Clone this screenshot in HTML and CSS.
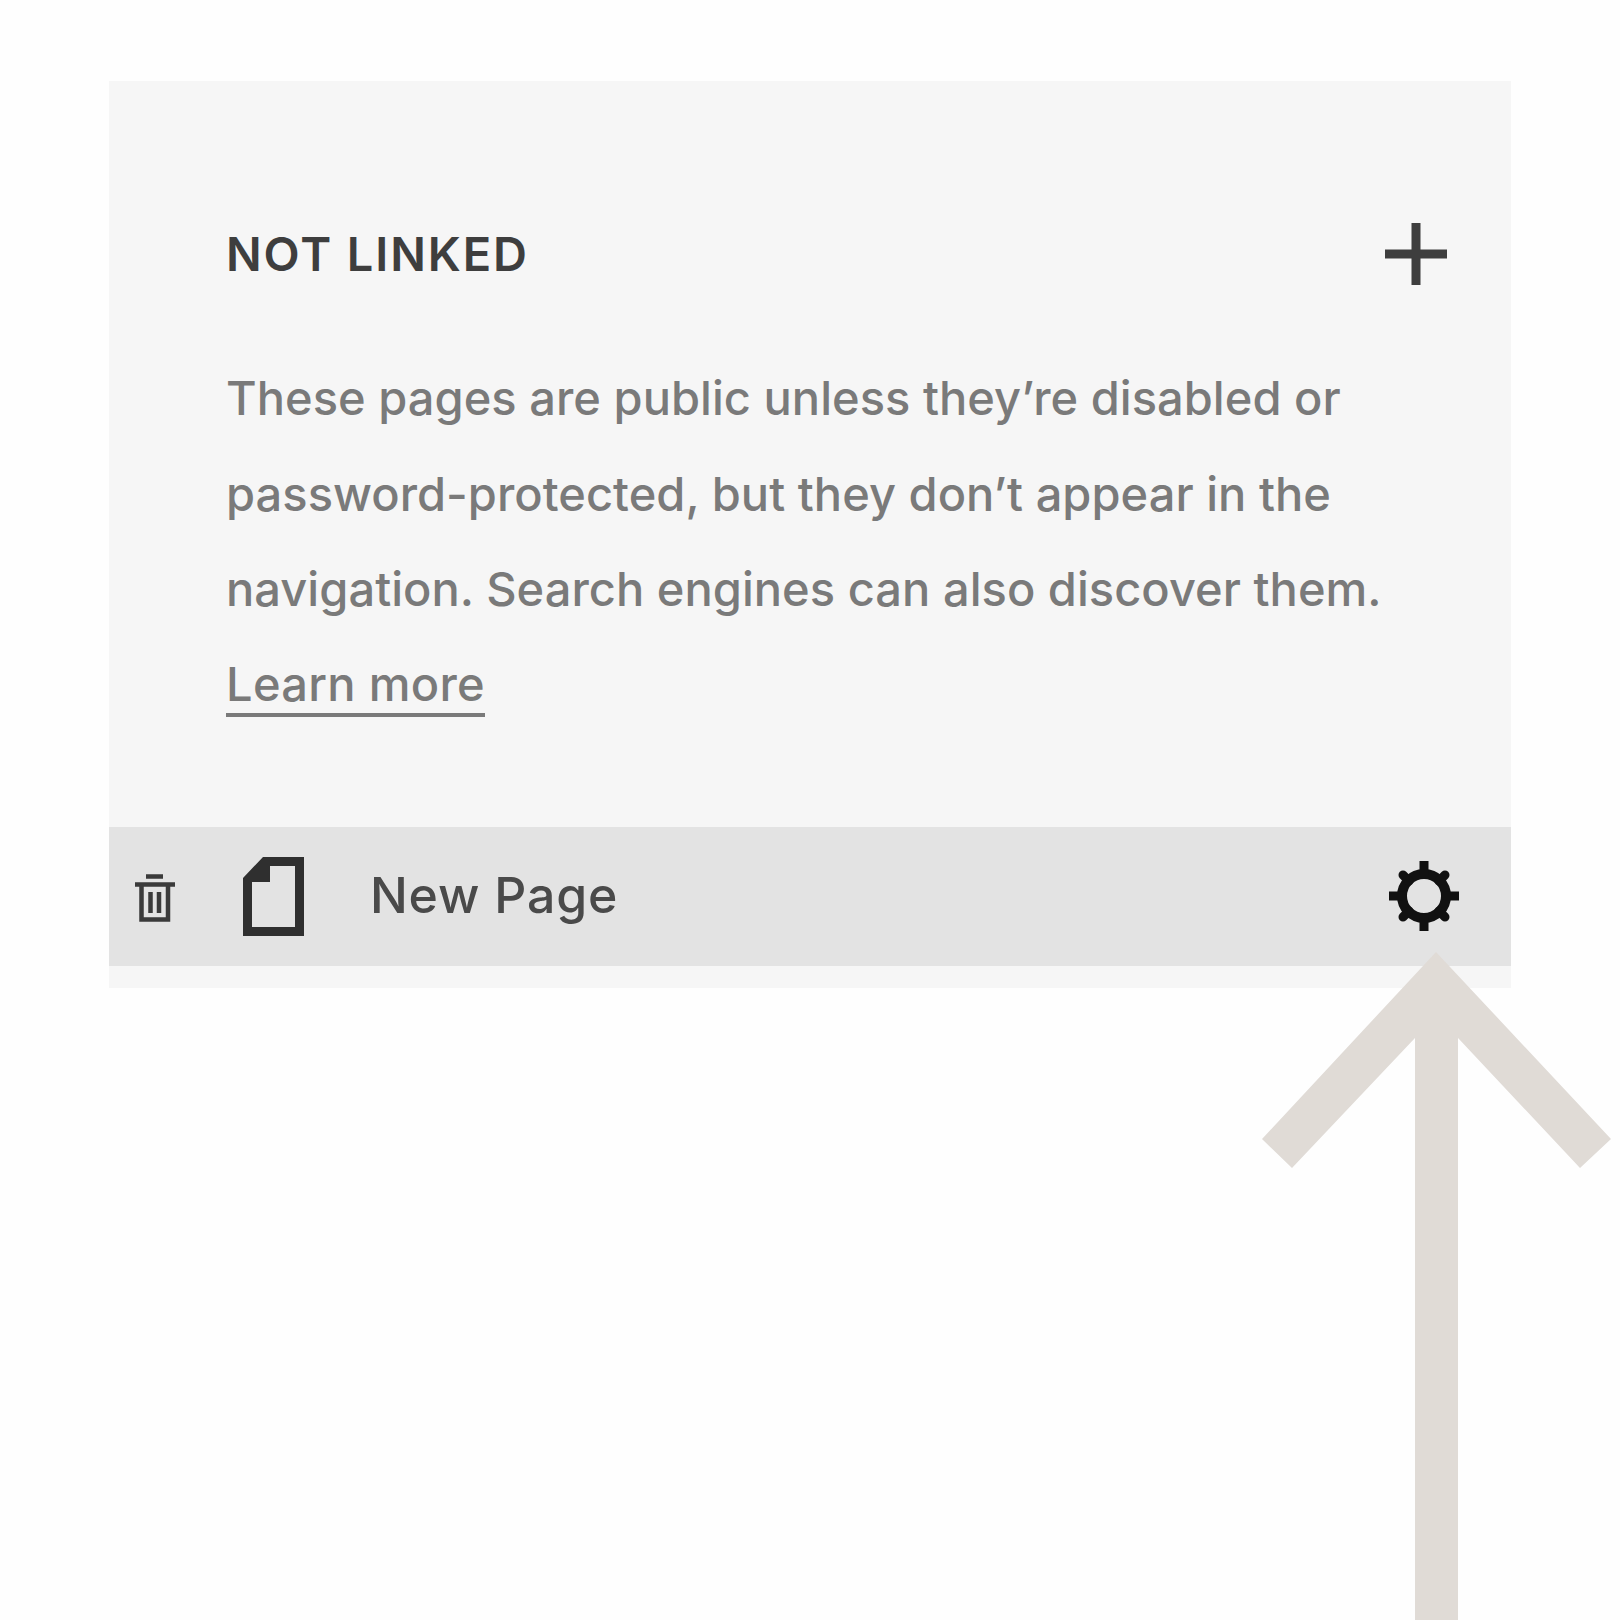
FILE: index.html
```html
<!DOCTYPE html>
<html lang="en">
<head>
    <meta charset="UTF-8">
    <title>Not Linked</title>
    <link rel="stylesheet" href="styles.css">
</head>
<body>
    <div class="panel">
        <div class="panel-head">
            <h2>NOT LINKED</h2>
            <svg class="plus-icon" viewBox="0 0 62 62"><path d="M31 0v62M0 31h62" fill="none" stroke="#3e3e3e" stroke-width="9"/></svg>
        </div>
        <p class="panel-text">These pages are public unless they’re disabled or password-protected, but they don’t appear in the navigation. Search engines can also discover them. <a href="#">Learn more</a></p>

        <div class="page-row">
            <svg class="trash-icon" viewBox="0 0 40 48">
                <path d="M11 2.500h17M0 10.500h40M6.500 10v35.500h26.500V10M15.500 18v21M24 18v21" fill="none" stroke="#3a3a3a" stroke-width="4.500"/>
            </svg>
            <svg class="page-icon" viewBox="0 0 61 79">
                <path d="M20 0H61V79H0V21ZM27 9V25H9V70H52V9Z" fill="#2f2f2f" fill-rule="evenodd"/>
            </svg>
            <span class="page-name">New Page</span>
            <svg class="gear-icon" viewBox="0 0 70 70">
                <circle cx="35" cy="35" r="22" fill="none" stroke="#111" stroke-width="10"/>
                <path d="M35 0v14M35 56v14M0 35h14M56 35h14" fill="none" stroke="#111" stroke-width="9"/>
                <path d="M14 14l6 6M56 14l-6 6M14 56l6-6M56 56l-6-6" fill="none" stroke="#111" stroke-width="9" stroke-linecap="round"/>
            </svg>
        </div>
    </div>

    <!-- arrow over the panel -->
    <svg class="arrow" viewBox="0 0 1620 1620">
        <path d="M1436 952L1611 1139L1580 1168L1458 1038V1620H1415V1038L1292 1168L1262 1139Z" fill="#e0dbd6"/>
    </svg>
</body>
</html>
```

FILE: styles.css
```css
* {
    margin: 0;
    padding: 0;
    box-sizing: border-box;
}

body {
    font-family: Inter, 'Liberation Sans', sans-serif;
    background: #fefefe;
    padding: 81px 109px 0;
    height: 1620px;
    overflow: hidden;
    position: relative;
}

.panel {
    background: #f6f6f6;
    height: 907px;
    padding-top: 140px;
}

.panel-head {
    display: flex;
    justify-content: space-between;
    align-items: center;
    height: 66px;
    padding: 0 64px 0 117px;
}

.panel-head h2 {
    font-size: 47px;
    font-weight: 600;
    letter-spacing: 1.900px;
    margin-bottom: 2px;
    color: #3e3e3e;
}

.plus-icon {
    width: 62px;
    height: 62px;
}

.panel-text {
    margin-top: 63px;
    padding: 0 117px;
    font-size: 47px;
    font-weight: 450;
    letter-spacing: 0.040px;
    line-height: 95.500px;
    color: #7a7a7a;
}

.panel-text a {
    display: block;
    width: fit-content;
    color: #7a7a7a;
    text-decoration: none;
    letter-spacing: 0.300px;
    line-height: 59px;
    margin-top: 17px;
    border-bottom: 4px solid #7a7a7a;
}

.page-row {
    display: flex;
    align-items: center;
    height: 139px;
    margin-top: 110px;
    padding: 0 52px 0 26px;
    background: #e3e3e3;
}

.trash-icon {
    width: 40px;
    height: 48px;
    margin-top: 4px;
}

.page-icon {
    width: 61px;
    height: 79px;
    margin-left: 68px;
}

.page-name {
    margin-left: 66px;
    margin-bottom: 3px;
    font-size: 50px;
    font-weight: 450;
    letter-spacing: 0.800px;
    color: #4a4a4a;
}

.gear-icon {
    width: 70px;
    height: 70px;
    margin-left: auto;
}

.arrow {
    position: absolute;
    top: 0;
    left: 0;
    width: 1620px;
    height: 1620px;
}
```
